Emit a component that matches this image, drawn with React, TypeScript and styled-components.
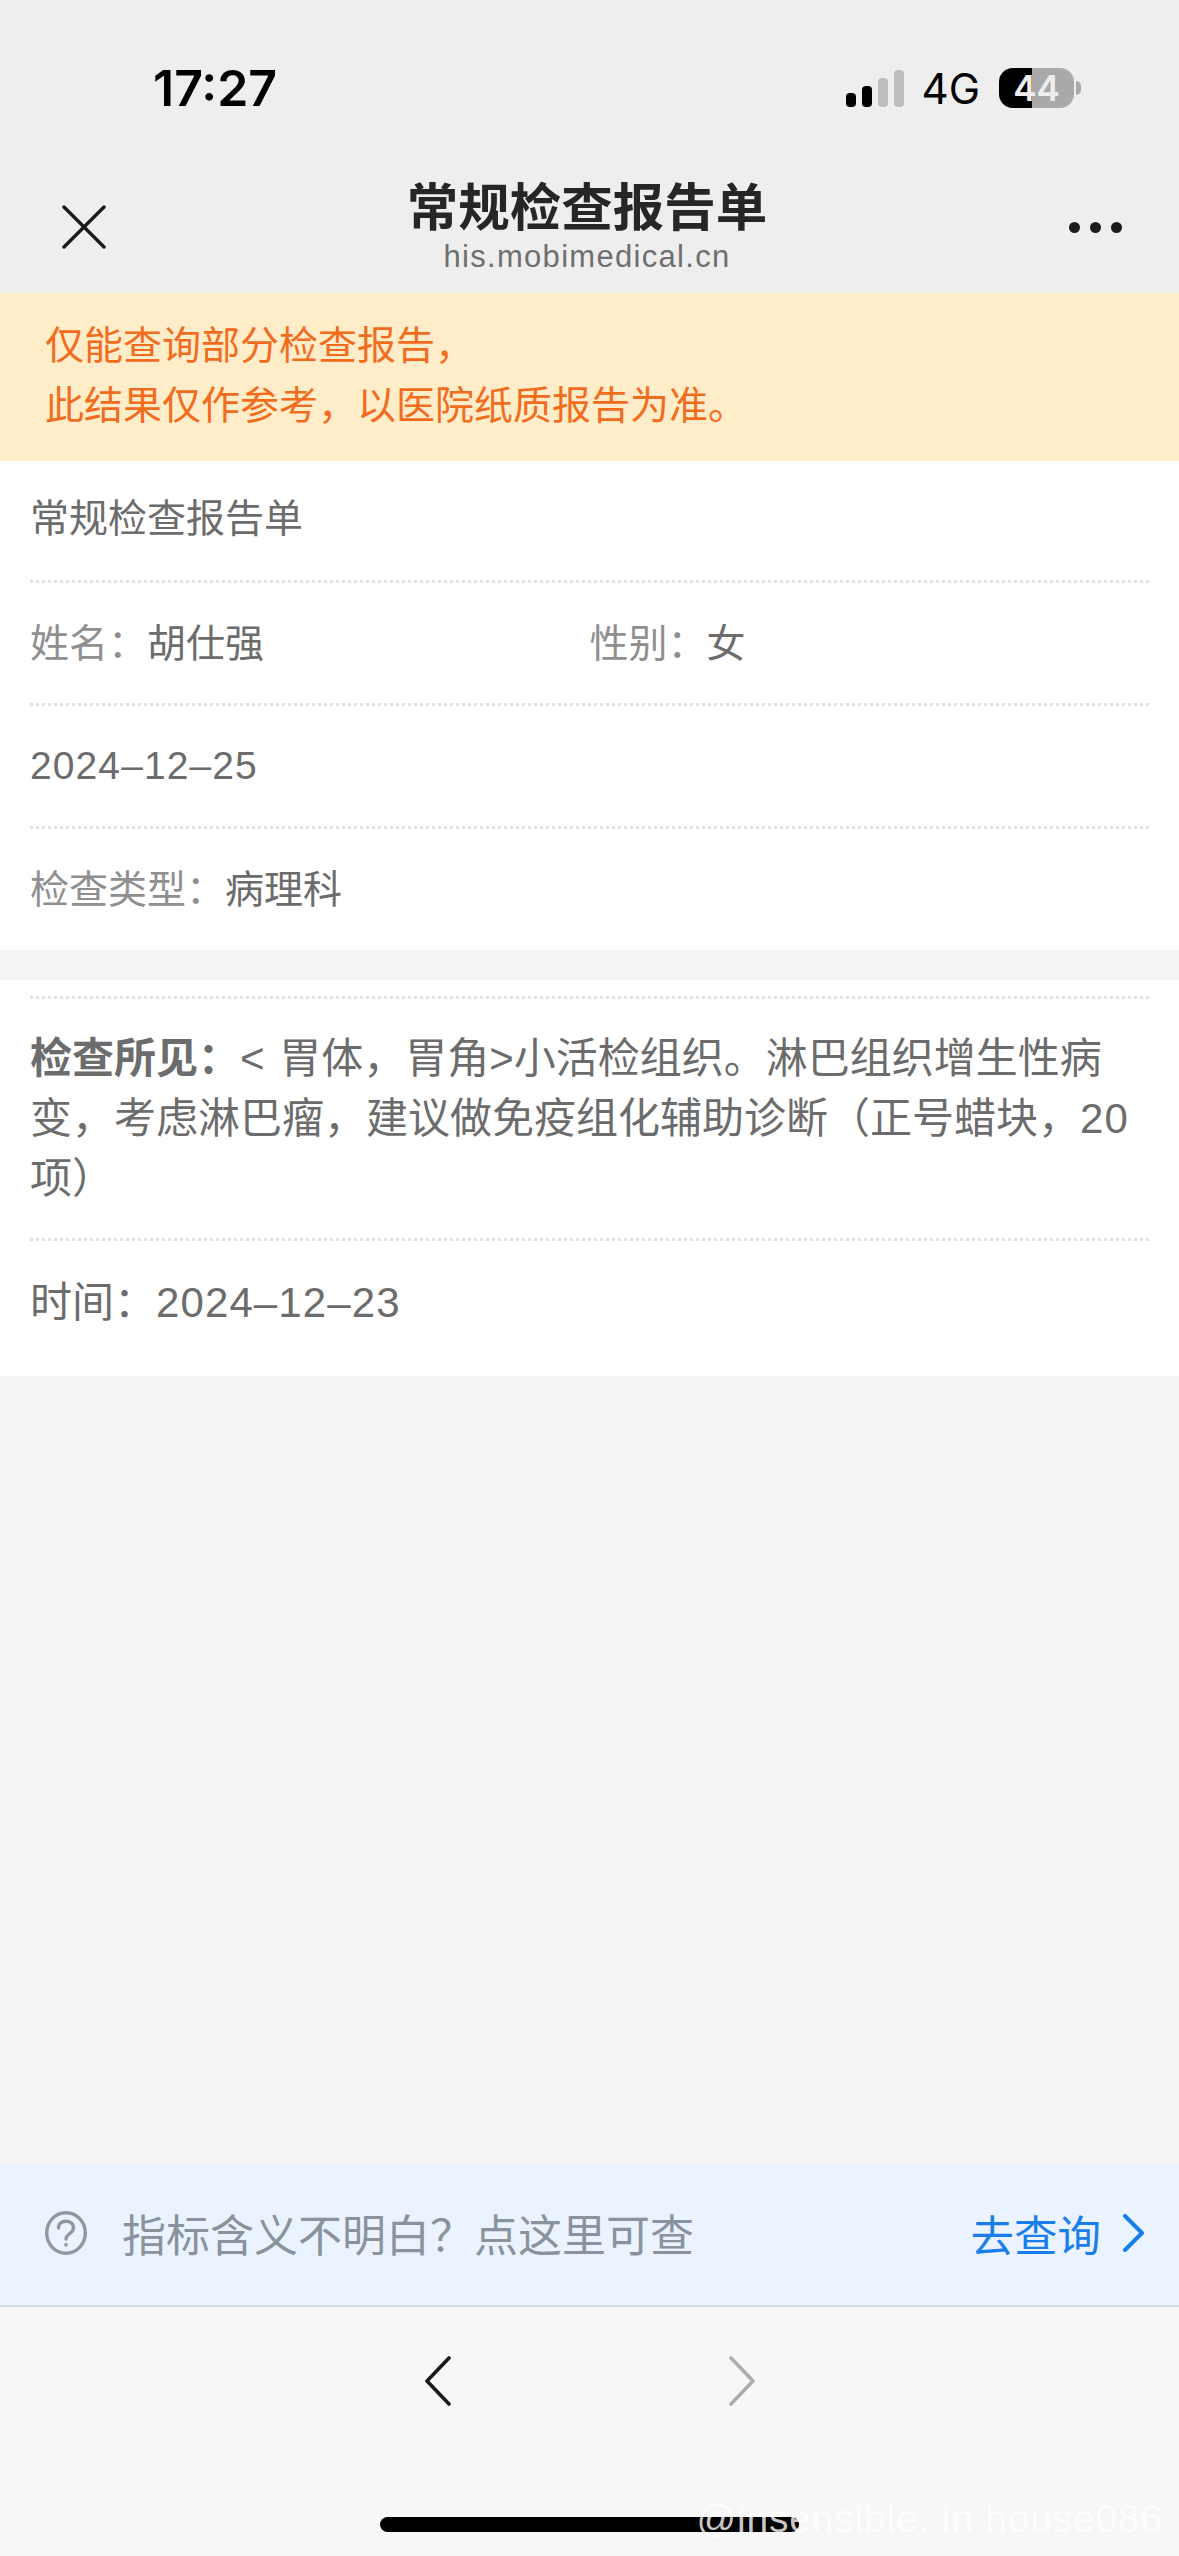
import React from "react";
import styled, { createGlobalStyle } from "styled-components";

const GlobalStyle = createGlobalStyle`
  html, body {
    margin: 0;
    padding: 0;
    background: #f4f4f4;
  }
  * {
    box-sizing: border-box;
  }
`;

const App = () => {
  return (
    <Page lang="zh-CN">
      <GlobalStyle />
      <Header>
        <StatusBar>
          <Clock>17:27</Clock>
          <StatusRight>
            <Signal>
              <SignalBar $height={14} $on />
              <SignalBar $height={21} $on />
              <SignalBar $height={29} />
              <SignalBar $height={37} />
            </Signal>
            <Network>4G</Network>
            <Battery>
              <BatteryLevel>44</BatteryLevel>
            </Battery>
            <BatteryNub />
          </StatusRight>
        </StatusBar>
        <NavBar>
          <CloseButton>
            <svg width="44" height="44" viewBox="0 0 44 44" fill="none" stroke="#1a1a1a" strokeWidth="3.4" strokeLinecap="round">
              <path d="M2 2 L42 42" />
              <path d="M42 2 L2 42" />
            </svg>
          </CloseButton>
          <TitleBlock>
            <Title>常规检查报告单</Title>
            <Domain>his.mobimedical.cn</Domain>
          </TitleBlock>
          <MoreButton>
            <Dot />
            <Dot />
            <Dot />
          </MoreButton>
        </NavBar>
      </Header>

      <Notice>
        仅能查询部分检查报告，
        <br />
        此结果仅作参考，以医院纸质报告为准。
      </Notice>

      <Content>
        <Card>
          <Row $first>
            <Value>常规检查报告单</Value>
          </Row>
          <Row>
            <Half>
              <Label>姓名：</Label>
              <Value>胡仕强</Value>
            </Half>
            <Half>
              <Label>性别：</Label>
              <Value>女</Value>
            </Half>
          </Row>
          <Row>
            <Numeric>2024–12–25</Numeric>
          </Row>
          <Row $last>
            <Label>检查类型：</Label>
            <Value>病理科</Value>
          </Row>
        </Card>

        <ResultCard>
          <Finding>
            <strong>检查所见：</strong>
            <Bracket>&lt;</Bracket> 胃体，胃角&gt;小活检组织。淋巴组织增生性病变，考虑淋巴瘤，建议做免疫组化辅助诊断（正号蜡块，<Numeric $large>20</Numeric>项）
          </Finding>
          <TimeRow>
            时间：<Numeric $large>2024–12–23</Numeric>
          </TimeRow>
        </ResultCard>
      </Content>

      <HelpBar>
        <HelpLeft>
          <svg width="42" height="44" viewBox="0 0 42 44" fill="none" stroke="#8f98a1" strokeWidth="3.4" strokeLinecap="round">
            <ellipse cx="21" cy="22" rx="19.3" ry="20.3" />
            <path d="M13.5 17 C13.5 8 28.5 8 28.5 17 C28.5 22.5 21 22.5 21 28" />
            <path d="M21 33.5 L21 34" />
          </svg>
          <HelpText>指标含义不明白？点这里可查</HelpText>
        </HelpLeft>
        <HelpLink>
          去查询
          <svg width="23" height="38" viewBox="0 0 23 38" fill="none" stroke="#1a7eea" strokeWidth="4" strokeLinecap="round" strokeLinejoin="round">
            <path d="M3 2 L20 19 L3 36" />
          </svg>
        </HelpLink>
      </HelpBar>

      <Toolbar>
        <ToolbarButtons>
          <svg width="26" height="50" viewBox="0 0 26 50" fill="none" stroke="#1a1a1a" strokeWidth="3.6" strokeLinecap="round" strokeLinejoin="round">
            <path d="M24 2 L2 25 L24 48" />
          </svg>
          <svg width="26" height="50" viewBox="0 0 26 50" fill="none" stroke="#adadad" strokeWidth="3.6" strokeLinecap="round" strokeLinejoin="round">
            <path d="M2 2 L24 25 L2 48" />
          </svg>
        </ToolbarButtons>
        <HomeBar />
        <Watermark>@insensible. in house086</Watermark>
      </Toolbar>
    </Page>
  );
};

export default App;

const cjk = `"Liberation Sans", "Noto Sans CJK SC", sans-serif`;

const Page = styled.div`
  display: flex;
  flex-direction: column;
  width: 1179px;
  height: 2556px;
  overflow: hidden;
  font-family: ${cjk};
  background: #f4f4f4;
`;

const Header = styled.header`
  height: 293px;
  background: #eeeeee;
`;

const StatusBar = styled.div`
  display: flex;
  align-items: center;
  justify-content: space-between;
  height: 176px;
  padding: 0 98px 0 153px;
`;

const Clock = styled.div`
  font-family: Inter, sans-serif;
  font-size: 50px;
  font-weight: 600;
  color: #000;
`;

const StatusRight = styled.div`
  display: flex;
  align-items: center;
`;

const Signal = styled.div`
  display: flex;
  align-items: flex-end;
  gap: 6px;
  height: 37px;
`;

const SignalBar = styled.span<{ $height: number; $on?: boolean }>`
  width: 10px;
  height: ${(p) => p.$height}px;
  border-radius: 4px;
  background: ${(p) => (p.$on ? "#000" : "#bdbdbd")};
`;

const Network = styled.div`
  margin-left: 18px;
  font-family: Inter, sans-serif;
  font-size: 42px;
  font-weight: 400;
  color: #000;
`;

const Battery = styled.div`
  display: flex;
  align-items: center;
  justify-content: center;
  width: 75px;
  height: 40px;
  margin-left: 19px;
  border-radius: 14px;
  background: linear-gradient(90deg, #000 44%, #a9a9a9 44%);
`;

const BatteryLevel = styled.span`
  font-family: Inter, sans-serif;
  font-size: 35px;
  font-weight: 600;
  color: #eeeeee;
`;

const BatteryNub = styled.span`
  width: 5px;
  height: 14px;
  margin-left: 2px;
  border-radius: 0 7px 7px 0;
  background: #a9a9a9;
`;

const NavBar = styled.div`
  display: grid;
  grid-template-columns: 1fr auto 1fr;
  align-items: center;
  padding: 2px 57px 0 52px;
`;

const CloseButton = styled.div`
  display: flex;
  margin-left: 10px;
`;

const TitleBlock = styled.div`
  display: flex;
  flex-direction: column;
  align-items: center;
`;

const Title = styled.div`
  font-size: 51.5px;
  line-height: 60px;
  font-weight: 700;
  color: #262626;
`;

const Domain = styled.div`
  font-size: 31px;
  line-height: 38px;
  letter-spacing: 1.3px;
  color: #6e6e6e;
`;

const MoreButton = styled.div`
  display: flex;
  justify-content: flex-end;
  gap: 10px;
`;

const Dot = styled.span`
  width: 11px;
  height: 11px;
  border-radius: 50%;
  background: #1c1c1c;
`;

const Notice = styled.div`
  height: 168px;
  padding: 23px 45px 0;
  font-size: 39px;
  line-height: 60px;
  color: #f26c1e;
  background: #ffecc8;
`;

const Content = styled.main`
  flex: 1;
`;

const Card = styled.section`
  padding: 0 30px;
  background: #fff;
`;

const Row = styled.div<{ $first?: boolean; $last?: boolean }>`
  display: flex;
  padding: ${(p) => (p.$first ? "28px 0 31px" : p.$last ? "31px 0 30px" : "30px 0 30px")};
  font-size: 39px;
  line-height: 60px;
  border-bottom: ${(p) => (p.$last ? "none" : "3px dotted #e2e2e2")};
`;

const Half = styled.div`
  display: flex;
  width: 50%;
  margin-top: 1px;
  margin-bottom: -1px;
`;

const Label = styled.span`
  color: #8f8f8f;
`;

const Value = styled.span`
  color: #6c6c6c;
`;

const Numeric = styled.span<{ $large?: boolean }>`
  letter-spacing: 1.1px;
  color: #6c6c6c;
  font-size: ${(p) => (p.$large ? "42px" : "39px")};
`;

const ResultCard = styled.section`
  margin-top: 30px;
  padding: 16px 30px 0;
  font-size: 42px;
  line-height: 60px;
  color: #6c6c6c;
  background: #fff;
`;

const Finding = styled.p`
  margin: 0;
  padding: 30px 0 29px;
  border-top: 3px dotted #e2e2e2;
  border-bottom: 3px dotted #e2e2e2;
`;

const Bracket = styled.span`
  margin-right: 3px;
`;

const TimeRow = styled.div`
  padding: 32px 0 43px;
`;

const HelpBar = styled.div`
  display: flex;
  align-items: center;
  justify-content: space-between;
  height: 143px;
  padding: 0 34px 3px 45px;
  background: #eaf3ff;
  border-bottom: 2px solid #d5dade;
`;

const HelpLeft = styled.div`
  display: flex;
  align-items: center;
  gap: 35px;
`;

const HelpText = styled.span`
  font-size: 44px;
  color: #8a939c;
`;

const HelpLink = styled.div`
  display: flex;
  align-items: center;
  gap: 21px;
  font-size: 43.5px;
  color: #1a7eea;
`;

const Toolbar = styled.div`
  position: relative;
  display: flex;
  flex-direction: column;
  align-items: center;
  height: 249px;
  padding-top: 49px;
  background: #f7f7f7;
`;

const ToolbarButtons = styled.div`
  display: flex;
  gap: 278px;
`;

const HomeBar = styled.div`
  width: 419px;
  height: 15px;
  margin-top: 111px;
  border-radius: 8px;
  background: #000;
`;

const Watermark = styled.div`
  position: absolute;
  right: 16px;
  bottom: 15px;
  font-size: 39px;
  line-height: 45px;
  letter-spacing: 0.8px;
  color: rgba(255, 255, 255, 0.78);
`;
